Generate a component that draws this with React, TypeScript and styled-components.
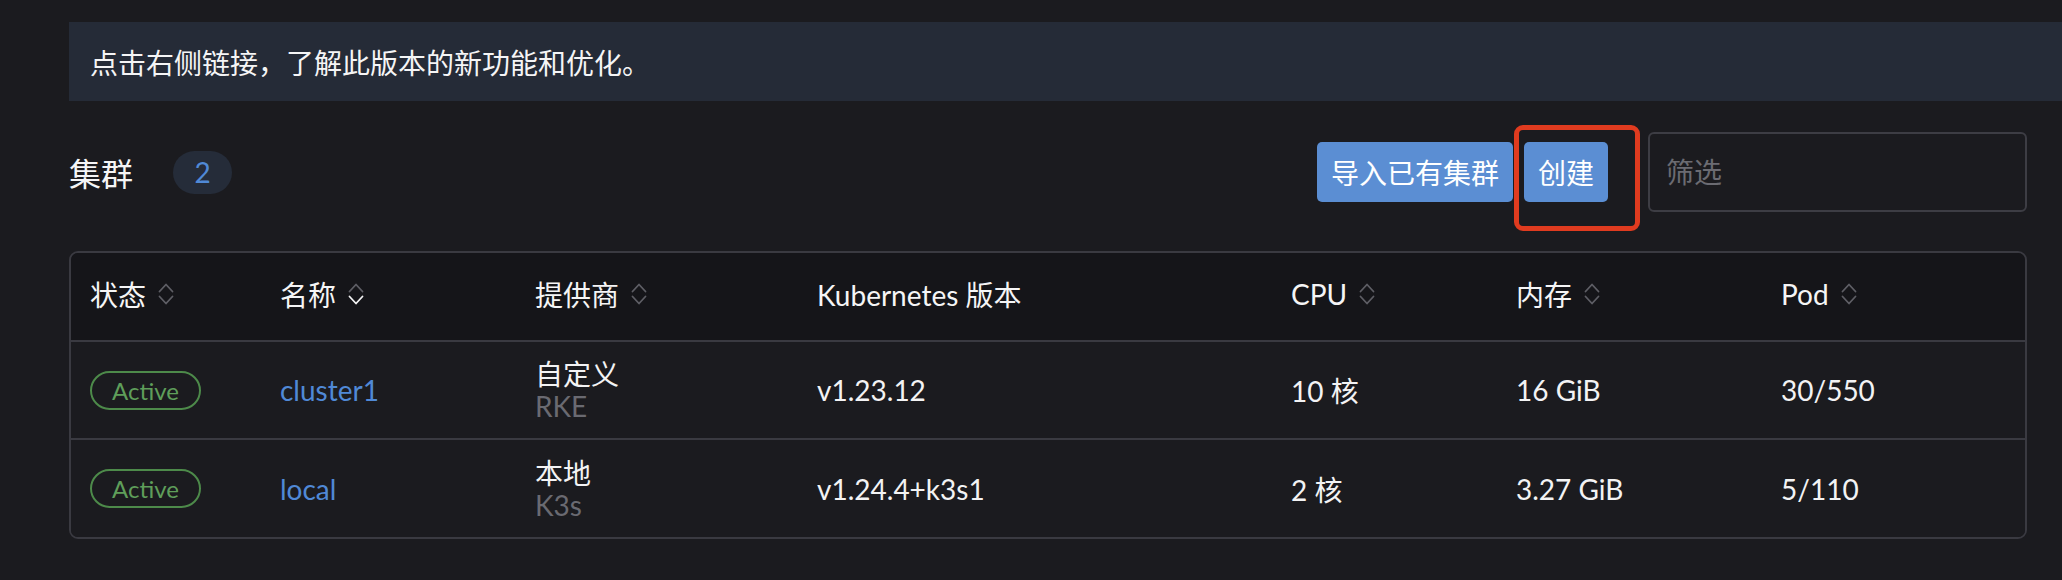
import React from "react";
import styled, { createGlobalStyle } from "styled-components";

const GlobalStyle = createGlobalStyle`
  html, body {
    margin: 0;
    padding: 0;
    background: #1b1b1f;
  }
  body {
    font-family: Lato, "Noto Sans CJK SC", "Noto Sans", sans-serif;
    color: #f3f3f4;
  }
`;

const Page = styled.div`
  min-height: 580px;
  box-sizing: border-box;
  padding: 22px 35px 0 69px;
  background: #1b1b1f;
`;

const Banner = styled.div`
  height: 79px;
  margin-right: -35px;
  padding-left: 21px;
  display: flex;
  align-items: center;
  background: #252b37;
  font-size: 28px;
  color: #f5f5f6;
`;

const HeaderBar = styled.div`
  margin-top: 31px;
  height: 80px;
  display: flex;
  align-items: center;
`;

const Title = styled.h1`
  margin: 0;
  font-size: 32px;
  font-weight: 400;
  color: #f5f5f6;
`;

const CountBadge = styled.span`
  margin-left: 40px;
  width: 59px;
  height: 43px;
  border-radius: 22px;
  background: #252c39;
  color: #5089d6;
  font-size: 28px;
  display: flex;
  align-items: center;
  justify-content: center;
`;

const Spacer = styled.div`
  flex: 1;
`;

const Actions = styled.div`
  display: flex;
  align-items: center;
  gap: 11px;
`;

const Button = styled.button`
  height: 60px;
  padding: 0 14px;
  border: none;
  border-radius: 5px;
  background: #5b8ed3;
  color: #ffffff;
  font-family: inherit;
  font-size: 28px;
  cursor: pointer;
`;

const Highlighted = styled.span`
  position: relative;
  display: inline-flex;
`;

const Annotation = styled.span`
  position: absolute;
  left: -10px;
  right: -32px;
  top: -17px;
  bottom: -29px;
  border: 5px solid #e03b1f;
  border-radius: 9px;
  pointer-events: none;
`;

const FilterInput = styled.input`
  margin-left: 40px;
  width: 379px;
  height: 80px;
  box-sizing: border-box;
  padding: 0 16px;
  background: transparent;
  border: 2px solid #3d3d44;
  border-radius: 6px;
  font-family: inherit;
  font-size: 28px;
  color: #f3f3f4;
  outline: none;
  &::placeholder {
    color: #6b6b72;
  }
`;

const TableFrame = styled.div`
  margin-top: 39px;
  border: 2px solid #3a3a41;
  border-radius: 9px;
  overflow: hidden;
`;

const Table = styled.table`
  width: 100%;
  border-collapse: collapse;
  table-layout: fixed;
`;

const HeadRow = styled.tr`
  height: 88px;
  background: #151519;
`;

const Th = styled.th`
  padding: 0 0 5px 19px;
  text-align: left;
  font-weight: 400;
  font-size: 28px;
  color: #f5f5f6;
  white-space: nowrap;
`;

const HeadLabel = styled.span`
  display: inline-flex;
  align-items: center;
  gap: 12px;
`;

const BodyRow = styled.tr`
  height: 98px;
  background: #1b1b1f;
  border-top: 2px solid #3a3a41;
`;

const Td = styled.td`
  padding: 0 0 0 19px;
  font-size: 28px;
  color: #f3f3f4;
  white-space: nowrap;
  vertical-align: middle;
`;

const StateBadge = styled.span`
  display: inline-flex;
  align-items: center;
  height: 39px;
  box-sizing: border-box;
  padding: 0 20px;
  border: 2px solid #4d8a4a;
  border-radius: 20px;
  color: #5f9e5a;
  font-size: 24px;
`;

const NameLink = styled.a`
  color: #5089d6;
  text-decoration: none;
  font-size: 28px;
`;

const Provider = styled.div`
  display: flex;
  flex-direction: column;
  line-height: 32px;
`;

const ProviderSub = styled.span`
  color: #6a6a71;
`;

type SortState = "none" | "desc";

const SortIcon: React.FC<{ state?: SortState }> = ({ state = "none" }) => (
  <svg width="16" height="24" viewBox="0 0 16 24" fill="none">
    <path
      d="M1.5 9.5 L8 2.5 L14.5 9.5"
      stroke="#5e5e65"
      strokeWidth="1.8"
      strokeLinecap="round"
      strokeLinejoin="round"
    />
    <path
      d="M1.5 14.5 L8 21.5 L14.5 14.5"
      stroke={state === "desc" ? "#f3f3f4" : "#5e5e65"}
      strokeWidth="1.8"
      strokeLinecap="round"
      strokeLinejoin="round"
    />
  </svg>
);

const columns: { label: string; width: number; sortable: boolean; sort?: SortState }[] = [
  { label: "状态", width: 190, sortable: true },
  { label: "名称", width: 255, sortable: true, sort: "desc" },
  { label: "提供商", width: 282, sortable: true },
  { label: "Kubernetes 版本", width: 474, sortable: false },
  { label: "CPU", width: 225, sortable: true },
  { label: "内存", width: 265, sortable: true },
  { label: "Pod", width: 267, sortable: true },
];

const clusters = [
  {
    name: "cluster1",
    provider: "自定义",
    sub: "RKE",
    version: "v1.23.12",
    cpu: "10 核",
    memory: "16 GiB",
    pods: "30/550",
  },
  {
    name: "local",
    provider: "本地",
    sub: "K3s",
    version: "v1.24.4+k3s1",
    cpu: "2 核",
    memory: "3.27 GiB",
    pods: "5/110",
  },
];

export default function App() {
  return (
    <>
      <GlobalStyle />
      <Page>
        <Banner>点击右侧链接，了解此版本的新功能和优化。</Banner>
        <HeaderBar>
          <Title>集群</Title>
          <CountBadge>2</CountBadge>
          <Spacer />
          <Actions>
            <Button>导入已有集群</Button>
            <Highlighted>
              <Button>创建</Button>
              <Annotation />
            </Highlighted>
          </Actions>
          <FilterInput placeholder="筛选" />
        </HeaderBar>
        <TableFrame>
          <Table>
            <colgroup>
              {columns.map((c) => (
                <col key={c.label} style={{ width: c.width }} />
              ))}
            </colgroup>
            <thead>
              <HeadRow>
                {columns.map((c) => (
                  <Th key={c.label}>
                    <HeadLabel>
                      {c.label}
                      {c.sortable && <SortIcon state={c.sort} />}
                    </HeadLabel>
                  </Th>
                ))}
              </HeadRow>
            </thead>
            <tbody>
              {clusters.map((cl) => (
                <BodyRow key={cl.name}>
                  <Td>
                    <StateBadge>Active</StateBadge>
                  </Td>
                  <Td>
                    <NameLink href="#">{cl.name}</NameLink>
                  </Td>
                  <Td>
                    <Provider>
                      <span>{cl.provider}</span>
                      <ProviderSub>{cl.sub}</ProviderSub>
                    </Provider>
                  </Td>
                  <Td>{cl.version}</Td>
                  <Td>{cl.cpu}</Td>
                  <Td>{cl.memory}</Td>
                  <Td>{cl.pods}</Td>
                </BodyRow>
              ))}
            </tbody>
          </Table>
        </TableFrame>
      </Page>
    </>
  );
}
